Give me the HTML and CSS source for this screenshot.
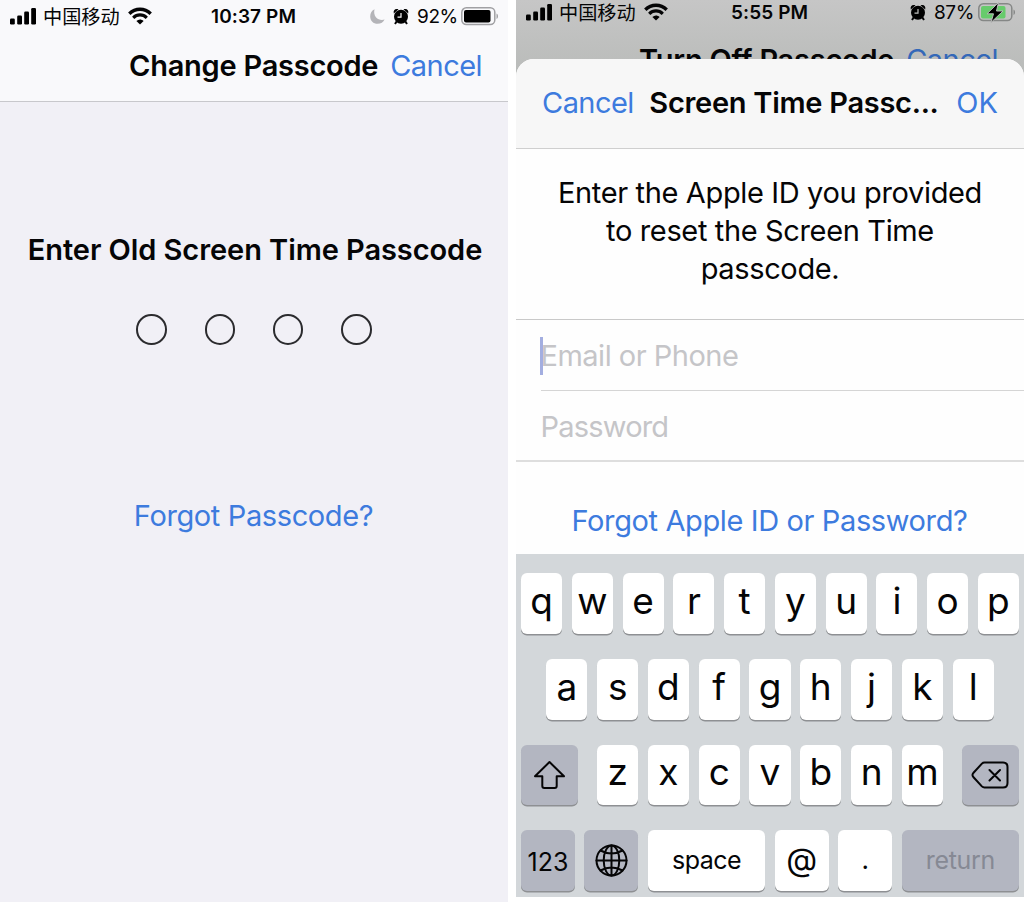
FILE: index.html
```html
<!DOCTYPE html>
<html lang="en">
<head>
    <meta charset="UTF-8">
    <meta name="viewport" content="width=device-width, initial-scale=1.0">
    <title>Screen Time Passcode</title>
    <link rel="stylesheet" href="styles.css">
</head>
<body>
    <!-- Shared status bar icons -->
    <svg class="symbols" width="0" height="0">
        <symbol id="signal" viewBox="0 0 26 17">
            <rect x="0" y="10.5" width="4.8" height="6" rx="1.2"/>
            <rect x="7.2" y="7.5" width="4.8" height="9" rx="1.2"/>
            <rect x="14.2" y="3.5" width="4.8" height="13" rx="1.2"/>
            <rect x="21.2" y="0" width="4.8" height="16.5" rx="1.2"/>
        </symbol>
        <symbol id="wifi" viewBox="0 0 24 18">
            <path d="M1.3 6.8C7.4.8 16.6.8 22.7 6.8" fill="none" stroke="currentColor" stroke-width="3.4"/>
            <path d="M5.2 10.8c4-3.8 9.6-3.8 13.6 0" fill="none" stroke="currentColor" stroke-width="3.2"/>
            <path d="M8.4 13.9c2.2-2 5-2 7.2 0L12 17.6z"/>
        </symbol>
        <symbol id="alarm" viewBox="0 0 16 17">
            <circle cx="8" cy="8.8" r="7"/>
            <path d="M.8 5.5C0 1.6 2.4.2 5.5 1.2zM15.2 5.5C16 1.6 13.6.2 10.5 1.2z"/>
            <path d="M3.6 13.5 2 16M12.4 13.5 14 16" stroke="currentColor" stroke-width="2"/>
            <path class="hands" d="M8 5v4.2H4.5" fill="none" stroke-width="1.2"/>
        </symbol>
    </svg>

    <!-- Change passcode screen -->
    <section class="phone phone-left">
        <header>
            <div class="status">
                <svg class="signal"><use href="#signal"/></svg>
                <span class="carrier">中国移动</span>
                <svg class="wifi"><use href="#wifi"/></svg>
                <span class="time">10:37 PM</span>
                <svg class="moon" viewBox="0 0 15 15"><path d="M4.500.2C1.500 1.500.2 4.500.2 7.400.2 11.600 3.400 14.800 7.600 14.800c3.200 0 5.800-1.600 7-4.300C9.500 12.300 2.600 8.500 4.500.2z"/></svg>
                <svg class="alarm"><use href="#alarm"/></svg>
                <span class="percent">92%</span>
                <svg class="battery" viewBox="0 0 38 19">
                    <rect class="shell" x=".8" y=".8" width="33" height="16.8" rx="4.5"/>
                    <rect x="3" y="3" width="26.5" height="12.4" rx="2"/>
                    <path class="cap" d="M35.5 6.5c2 .8 2 4.7 0 5.5z"/>
                </svg>
            </div>
            <div class="nav">
                <h1>Change Passcode</h1>
                <a>Cancel</a>
            </div>
        </header>
        <h2>Enter Old Screen Time Passcode</h2>
        <div class="dots">
            <i></i><i></i><i></i><i></i>
        </div>
        <a class="forgot">Forgot Passcode?</a>
    </section>

    <!-- Apple ID sheet -->
    <section class="phone phone-right">
        <div class="behind">
            <div class="status">
                <svg class="signal"><use href="#signal"/></svg>
                <span class="carrier">中国移动</span>
                <svg class="wifi"><use href="#wifi"/></svg>
                <span class="time">5:55 PM</span>
                <svg class="alarm"><use href="#alarm"/></svg>
                <span class="percent">87%</span>
                <svg class="battery" viewBox="0 0 38 19">
                    <rect class="shell" x=".8" y=".8" width="33" height="16.8" rx="4.5"/>
                    <rect class="charge" x="3" y="3" width="24.5" height="12.4" rx="2"/>
                    <path class="cap" d="M35.5 6.5c2 .8 2 4.7 0 5.5z"/>
                    <path class="bolt" d="M20.5-.5 9 10.8h6.500L13 19.500 25 8h-6.500z"/>
                </svg>
            </div>
            <div class="nav">
                <h1>Turn Off Passcode</h1>
                <a>Cancel</a>
            </div>
        </div>
        <div class="sheet">
            <div class="sheet-nav">
                <a class="cancel">Cancel</a>
                <h1>Screen Time Passc...</h1>
                <a class="ok">OK</a>
            </div>
            <p class="message">
                Enter the Apple ID you provided<br>
                to reset the Screen Time<br>
                passcode.
            </p>
            <div class="fields">
                <div class="field email"><span class="caret"></span>Email or Phone</div>
                <div class="field password">Password</div>
            </div>
            <a class="forgot">Forgot Apple ID or Password?</a>
        </div>
        <div class="keyboard">
            <div class="row">
                <b>q</b><b>w</b><b>e</b><b>r</b><b>t</b><b>y</b><b>u</b><b>i</b><b>o</b><b>p</b>
            </div>
            <div class="row">
                <b>a</b><b>s</b><b>d</b><b>f</b><b>g</b><b>h</b><b>j</b><b>k</b><b>l</b>
            </div>
            <div class="row">
                <b class="dark shift">
                    <svg width="33" height="30" viewBox="0 0 33 30"><path d="M16.5 2 31 16.3h-7.3V26q0 2-2 2H11.3q-2 0-2-2v-9.7H2z"/></svg>
                </b>
                <b>z</b><b>x</b><b>c</b><b>v</b><b>b</b><b>n</b><b>m</b>
                <b class="dark delete">
                    <svg width="38" height="28" viewBox="0 0 38 28"><path d="M13.5 1.5H32q4.5 0 4.5 4.5v16q0 4.5-4.5 4.5H13.5q-1.5 0-2.6-1.1L2.3 16q-1.6-2 0-4l8.6-9.4Q12 1.5 13.5 1.5zM18.500 9l10.500 10.500M29 9 18.500 19.500"/></svg>
                </b>
            </div>
            <div class="row">
                <b class="dark small num">123</b>
                <b class="dark small">
                    <svg width="33" height="33" viewBox="0 0 33 33"><circle cx="16.5" cy="16.5" r="15"/><ellipse cx="16.5" cy="16.5" rx="7.8" ry="15"/><path d="M16.5 1.5v30M1.5 16.5h30M5.5 6.5q11 6 22 0M5.5 26.5q11-6 22 0"/></svg>
                </b>
                <b class="wide">space</b>
                <b class="small at">@</b>
                <b class="small dot">.</b>
                <b class="dark wide return">return</b>
            </div>
        </div>
    </section>
</body>
</html>
```

FILE: styles.css
```css
* {
    box-sizing: border-box;
}

body {
    font-family: Inter, "Noto Sans CJK SC", sans-serif;
    margin: 0;
    display: flex;
    gap: 8px;
    height: 902px;
    background: #ffffff;
    color: #050506;
    overflow: hidden;
}

h1, h2, p {
    margin: 0;
}

svg {
    display: block;
    flex: none;
}

.symbols {
    position: absolute;
}

a {
    color: #3d7bde;
    font-size: 29px;
    letter-spacing: -0.55px;
    white-space: nowrap;
}

h1, h2 {
    font-size: 29px;
    font-weight: 600;
    letter-spacing: -0.25px;
    white-space: nowrap;
}

.phone {
    width: 508px;
    height: 902px;
    flex: none;
    --hands: #f9f9fb;
}

/* Status bar */
.status {
    display: flex;
    align-items: center;
    height: 32px;
    padding-left: 10px;
    font-size: 19px;
    white-space: nowrap;
}

.signal {
    width: 26px;
    height: 17px;
}

.carrier {
    width: 77px;
    margin-left: 7px;
    font-family: "Noto Sans CJK SC", sans-serif;
    font-size: 19.2px;
    line-height: 22px;
}

.wifi {
    width: 24px;
    height: 18px;
    margin-left: 8px;
}

.time {
    width: 88px;
    margin-left: 59px;
    font-weight: 600;
    letter-spacing: 0.1px;
}

.moon {
    width: 15px;
    height: 15px;
    margin-left: 71px;
    fill: #b4b4b8;
}

.alarm {
    width: 16px;
    height: 17px;
    margin-left: 8px;
}

.hands {
    stroke: var(--hands);
}

.percent {
    width: 41px;
    margin-left: 8px;
    letter-spacing: -0.4px;
}

.battery {
    width: 38px;
    height: 19px;
    margin-left: 3px;
    overflow: visible;
}

.shell {
    fill: none;
    stroke: #a0a0a3;
    stroke-width: 1.5;
}

.cap {
    fill: #a0a0a3;
}

.charge {
    fill: #67cb6c;
}

.bolt {
    stroke: #b9bbba;
    stroke-width: 1;
}

/* Left screen */
.phone-left {
    background: #f1f0f6;
}

.phone-left header {
    height: 102px;
    background: #f9f9fb;
    border-bottom: 1px solid #c8c8cc;
}

.nav {
    display: flex;
    height: 67px;
    align-items: center;
    justify-content: flex-end;
    gap: 12px;
    padding-right: 26px;
}

.phone-left h2 {
    margin-top: 130px;
    line-height: 36px;
    letter-spacing: -0.07px;
    text-align: center;
    padding-left: 2px;
}

.dots {
    display: flex;
    justify-content: center;
    gap: 37.8px;
    margin-top: 46px;
}

.dots i {
    width: 30.5px;
    height: 30.5px;
    border: 2px solid #2b2b2e;
    border-radius: 50%;
}

.forgot {
    display: block;
    line-height: 36px;
    letter-spacing: -0.38px;
    text-align: center;
    padding-right: 1px;
}

.phone-left .forgot {
    margin-top: 153px;
}

/* Right screen */
.phone-right {
    display: flex;
    flex-direction: column;
}

.behind {
    --hands: #c0c1c0;
    height: 77px;
    margin-bottom: -18px;
    overflow: hidden;
    background: linear-gradient(#c6c6c6, #b9bbb9);
}

.behind .status {
    height: 24px;
}

.behind .nav {
    height: 71px;
}

.behind .time {
    margin-left: 63px;
    width: 77px;
}

.behind .alarm {
    margin-left: 102px;
}

.behind .shell {
    stroke: #858786;
}

.behind .cap {
    fill: #858786;
}

.behind a {
    color: #3468b8;
}

.sheet {
    position: relative;
    height: 495px;
    background: #fefefe;
    border-radius: 18px 18px 0 0;
    overflow: hidden;
}

.sheet-nav {
    display: flex;
    align-items: center;
    height: 90px;
    padding: 0 26px 2px;
    background: #f7f7f7;
    border-bottom: 1px solid #cfcfcf;
}

.sheet-nav h1 {
    margin-left: 15.5px;
    letter-spacing: -0.28px;
}

.sheet-nav .ok {
    margin-left: auto;
    letter-spacing: 0;
}

.message {
    padding-top: 25px;
    height: 171px;
    font-size: 29px;
    line-height: 38px;
    letter-spacing: -0.36px;
    text-align: center;
    border-bottom: 1px solid #c9c9c9;
}

.field {
    position: relative;
    height: 71px;
    margin-left: 24.5px;
    line-height: 72px;
    font-size: 29px;
    letter-spacing: -0.5px;
    color: #c5c5c8;
}

.email {
    border-bottom: 1px solid #d5d5d5;
}

.password {
    height: 69px;
    letter-spacing: -0.8px;
}

.caret {
    position: absolute;
    left: -1px;
    top: 17px;
    width: 3px;
    height: 38px;
    background: #a3aee0;
}

.fields {
    border-bottom: 2px solid #dedede;
}

.sheet .forgot {
    margin-top: 41px;
}

/* Keyboard */
.keyboard {
    display: flex;
    flex-direction: column;
    gap: 25px;
    height: 343px;
    padding: 19px 5px 0;
    background: #d3d7da;
}

.row {
    display: flex;
    justify-content: center;
    gap: 9.7px;
}

.row b {
    display: flex;
    justify-content: center;
    width: 41.1px;
    height: 60.8px;
    padding-bottom: 6px;
    align-items: center;
    background: #ffffff;
    border-radius: 6px;
    box-shadow: 0 1.5px 0 #8e9093;
    font-size: 37px;
    font-weight: 400;
}

.row .dark {
    background: #b3b6c1;
    padding-bottom: 0;
}

.row svg {
    fill: none;
    stroke: #050506;
    stroke-width: 2;
    stroke-linejoin: round;
    stroke-linecap: round;
}

.row .shift {
    width: 57px;
    margin-right: 9.4px;
}

.row .delete {
    width: 57px;
    margin-left: 9.4px;
}

.row .small {
    width: 53.8px;
    font-size: 25px;
}

.row .num {
    padding-top: 2px;
}

.row .wide {
    width: 117.3px;
    padding-bottom: 2px;
    font-size: 25px;
    letter-spacing: -0.5px;
}

.row .at {
    padding-bottom: 3px;
    font-size: 32px;
}

.row .dot {
    padding-bottom: 2px;
    font-size: 26px;
}

.row .return {
    letter-spacing: -0.3px;
    color: #868994;
}
```
